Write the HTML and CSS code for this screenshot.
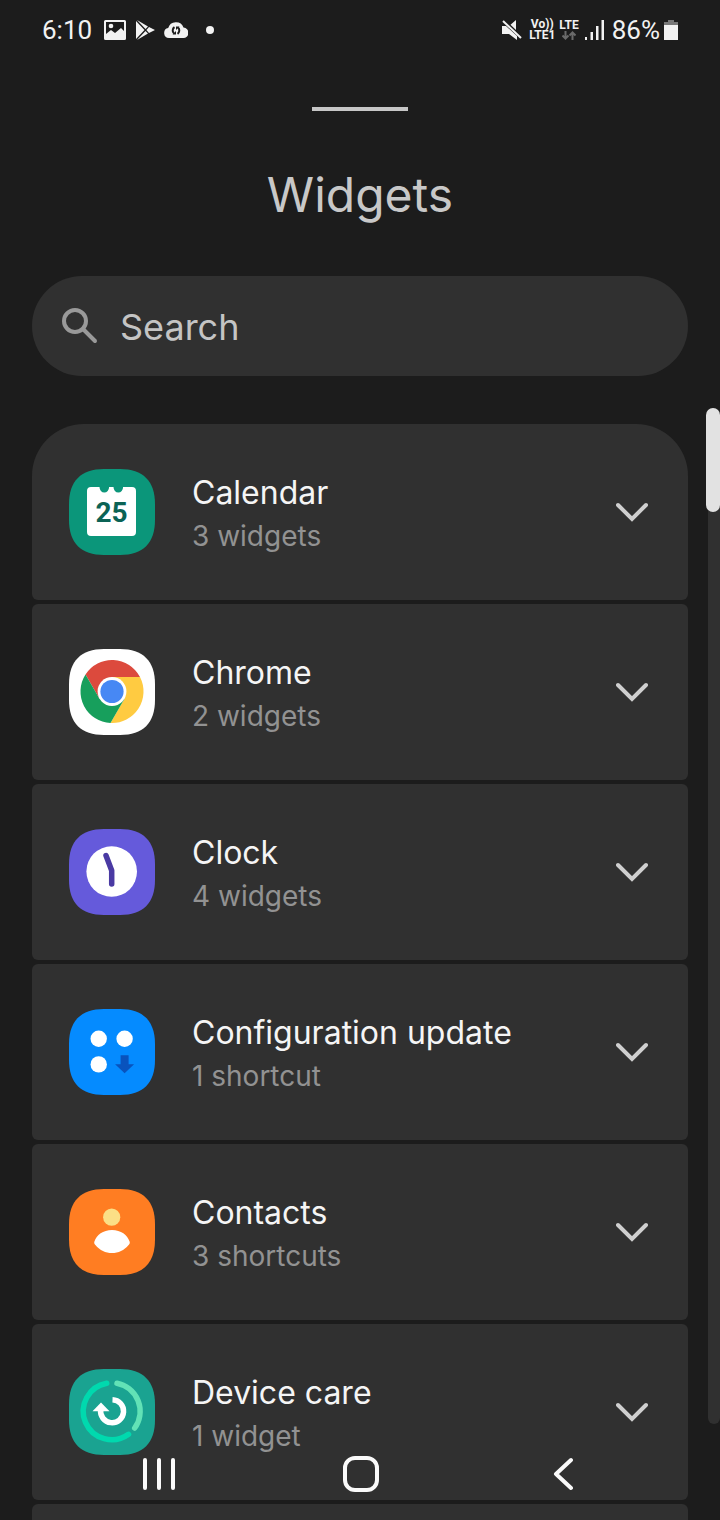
FILE: index.html
```
<!DOCTYPE html>
<html lang="en">
<head>
  <meta charset="UTF-8" />
  <meta name="viewport" content="width=device-width, initial-scale=1.0"/>
  <title>Widgets</title>
  <link rel="stylesheet" href="styles.css">
</head>
<body>
  <div class="screen">
    <header class="status">
      <span class="clock">6:10</span>
      <svg class="status-image" width="22" height="20" viewBox="0 0 22 20" aria-hidden="true">
        <path fill="#f2f2f2" fill-rule="evenodd" d="M1.500 0h19a1.500 1.500 0 0 1 1.500 1.500v17a1.500 1.500 0 0 1-1.500 1.500h-19a1.500 1.500 0 0 1-1.500-1.500v-17a1.500 1.500 0 0 1 1.500-1.500zM2 2v12l5-4 4 3 6-5 3 3V2z"/>
        <circle cx="7" cy="6" r="2.300" fill="#f2f2f2"/>
      </svg>
      <svg class="status-play" width="20" height="20" viewBox="0 0 20 20" aria-hidden="true">
        <path fill="#f2f2f2" d="M0 1v18l8.500-9zM1 0l8.500 9 2.500-2.600zM1 20l8.500-9 2.500 2.600zM13 7l-2.600 3 2.600 3 6-3z"/>
      </svg>
      <svg class="status-cloud" width="24" height="16" viewBox="0 0 24 16" aria-hidden="true">
        <path fill="#f2f2f2" d="M5 16a5 5 0 0 1-.8-9.900A8 8 0 0 1 19.500 5.600 5.200 5.200 0 0 1 19 16z"/>
        <path fill="none" stroke="#1c1c1c" stroke-width="2" d="M10.500 5.200a4 4 0 0 0-.5 6.300M13.500 11.800a4 4 0 0 0 .5-6.300"/>
        <path fill="#1c1c1c" d="M8.500 12.500h3.500v-3.500zM15.500 4.500H12V8z"/>
      </svg>
      <span class="dot"></span>
      <div class="status-right">
        <svg width="20" height="20" viewBox="0 0 20 20" aria-hidden="true">
          <path fill="#f2f2f2" d="M0 6h4l11 10v4l-8-6H0zM14 0v10L8.500 4.700z"/>
          <path stroke="#f2f2f2" stroke-width="2" d="M1 1l18 17"/>
        </svg>
        <span class="volte"><span>Vo))</span><span>LTE1</span></span>
        <span class="lte">
          <span>LTE</span>
          <svg width="14" height="9" viewBox="0 0 14 9" aria-hidden="true">
            <path fill="none" stroke="#6a6a6a" stroke-width="2" d="M3.500 0v7M.5 4.500l3 3 3-3M10.500 9V2M7.500 4.500l3-3 3 3"/>
          </svg>
        </span>
        <svg class="signal" width="19" height="20" viewBox="0 0 19 20" aria-hidden="true">
          <path fill="#f2f2f2" d="M0 17h2v3H0zM5.500 12h2.500v8H5.500zM11 6h2.500v14H11zM16.500 0H19v20h-2.500z"/>
        </svg>
        <span class="percent">86%</span>
        <svg width="14" height="20" viewBox="0 0 14 20" aria-hidden="true">
          <path fill="#777" d="M4 0h6v2h4v4H0V2h4z"/>
          <path fill="#f2f2f2" d="M0 5h14v15H0z"/>
        </svg>
      </div>
    </header>

    <main class="sheet">
      <div class="handle"></div>
      <h1>Widgets</h1>

      <label class="search">
        <svg width="36" height="36" viewBox="0 0 36 36" aria-hidden="true">
          <circle cx="13" cy="13" r="11" fill="none" stroke="#999" stroke-width="4"/>
          <path stroke="#999" stroke-width="4" stroke-linecap="round" d="M21 21l12 12"/>
        </svg>
        <input type="search" placeholder="Search" aria-label="Search">
      </label>

      <ul class="list">
        <li>
          <button class="row" aria-expanded="false">
            <svg class="app-icon" viewBox="0 0 88 88" aria-hidden="true">
              <path fill="#0b967a" d="M36 1H52C75 1 87 13 87 36V52C87 75 75 87 52 87H36C13 87 1 75 1 52V36C1 13 13 1 36 1z"/>
              <path fill="#fff" d="M23 19h8.500a4.800 5.500 0 0 0 9.600 0h4.400a4.800 5.500 0 0 0 9.600 0H64a4 4 0 0 1 4 4v41a4 4 0 0 1-4 4H23a4 4 0 0 1-4-4V23a4 4 0 0 1 4-4z"/>
              <text class="day" x="43.500" y="54" text-anchor="middle">25</text>
            </svg>
            <span class="label"><span class="name">Calendar</span><span class="count">3 widgets</span></span>
            <svg class="chevron" viewBox="0 0 32 20" aria-hidden="true"><path d="M2 3l14 14L30 3"/></svg>
          </button>
        </li>
        <li>
          <button class="row" aria-expanded="false">
            <svg class="app-icon" viewBox="0 0 88 88" aria-hidden="true">
              <path fill="#fff" d="M36 1H52C75 1 87 13 87 36V52C87 75 75 87 52 87H36C13 87 1 75 1 52V36C1 13 13 1 36 1z"/>
              <path fill="#dc4a3d" d="M17.500 26.500A31.500 31.500 0 0 1 72 29.100H44L31.500 50.700z"/>
              <path fill="#ffcb41" d="M72 29.100A31.500 31.500 0 0 1 42.500 75l14-24.300L44 29.100z"/>
              <path fill="#179f5c" d="M42.500 75a31.500 31.500 0 0 1-25-48.500l14 24.200h25z"/>
              <circle cx="44" cy="43.500" r="14.400" fill="#fff"/>
              <circle cx="44" cy="43.500" r="11.600" fill="#4788f4"/>
            </svg>
            <span class="label"><span class="name">Chrome</span><span class="count">2 widgets</span></span>
            <svg class="chevron" viewBox="0 0 32 20" aria-hidden="true"><path d="M2 3l14 14L30 3"/></svg>
          </button>
        </li>
        <li>
          <button class="row" aria-expanded="false">
            <svg class="app-icon" viewBox="0 0 88 88" aria-hidden="true">
              <path fill="#655adb" d="M36 1H52C75 1 87 13 87 36V52C87 75 75 87 52 87H36C13 87 1 75 1 52V36C1 13 13 1 36 1z"/>
              <circle cx="43.700" cy="43.500" r="25.300" fill="#fff"/>
              <path fill="none" stroke="#4a3aa3" stroke-width="5.500" stroke-linecap="round" stroke-linejoin="round" d="M38 27.500l5.700 15V56"/>
            </svg>
            <span class="label"><span class="name">Clock</span><span class="count">4 widgets</span></span>
            <svg class="chevron" viewBox="0 0 32 20" aria-hidden="true"><path d="M2 3l14 14L30 3"/></svg>
          </button>
        </li>
        <li>
          <button class="row" aria-expanded="false">
            <svg class="app-icon" viewBox="0 0 88 88" aria-hidden="true">
              <path fill="#058bff" d="M36 1H52C75 1 87 13 87 36V52C87 75 75 87 52 87H36C13 87 1 75 1 52V36C1 13 13 1 36 1z"/>
              <g fill="#fff">
                <circle cx="30.700" cy="30.700" r="8.200"/>
                <circle cx="56.600" cy="30.700" r="8.200"/>
                <circle cx="30.700" cy="56.400" r="8.200"/>
              </g>
              <path fill="#0953bd" d="M52.600 47.300h8v9h5.500l-9.500 9-9.500-9h5.500z"/>
            </svg>
            <span class="label"><span class="name">Configuration update</span><span class="count">1 shortcut</span></span>
            <svg class="chevron" viewBox="0 0 32 20" aria-hidden="true"><path d="M2 3l14 14L30 3"/></svg>
          </button>
        </li>
        <li>
          <button class="row" aria-expanded="false">
            <svg class="app-icon" viewBox="0 0 88 88" aria-hidden="true">
              <path fill="#ff7d22" d="M36 1H52C75 1 87 13 87 36V52C87 75 75 87 52 87H36C13 87 1 75 1 52V36C1 13 13 1 36 1z"/>
              <circle cx="43.700" cy="29.200" r="8.600" fill="#fbdf86"/>
              <path fill="#fff" d="M44 42c9 0 15.500 5 17.600 11.500.5 1.500 0 2.500-1 3.500C56 62.500 50.500 65 44 65s-12-2.500-16.600-8c-1-1-1.500-2-1-3.500C28.500 47 35 42 44 42z"/>
            </svg>
            <span class="label"><span class="name">Contacts</span><span class="count">3 shortcuts</span></span>
            <svg class="chevron" viewBox="0 0 32 20" aria-hidden="true"><path d="M2 3l14 14L30 3"/></svg>
          </button>
        </li>
        <li>
          <button class="row" aria-expanded="false">
            <svg class="app-icon" viewBox="0 0 88 88" aria-hidden="true">
              <path fill="#1aa391" d="M36 1H52C75 1 87 13 87 36V52C87 75 75 87 52 87H36C13 87 1 75 1 52V36C1 13 13 1 36 1z"/>
              <g fill="none" stroke-width="5.500" stroke-linecap="round">
                <path stroke="#00d9ae" d="M60.500 66.300A28.500 28.500 0 1 1 38.700 15.200"/>
                <path stroke="#62e2b6" d="M49 15.300A28.500 28.500 0 0 1 66.700 60"/>
              </g>
              <path fill="none" stroke="#fff" stroke-width="5.500" d="M44.500 31.700a11.500 11.500 0 1 1-11.800 9.800"/>
              <path fill="#fff" d="M33 34.500l8.500 8.800h-17z"/>
            </svg>
            <span class="label"><span class="name">Device care</span><span class="count">1 widget</span></span>
            <svg class="chevron" viewBox="0 0 32 20" aria-hidden="true"><path d="M2 3l14 14L30 3"/></svg>
          </button>
        </li>
        <li class="row"></li>
      </ul>
    </main>

    <div class="scroll-track"><div class="scroll-thumb"></div></div>

    <nav class="nav">
      <button aria-label="Recents">
        <svg width="32" height="36" viewBox="0 0 32 36"><path d="M2 4v28M16 4v28M30 4v28"/></svg>
      </button>
      <button aria-label="Home">
        <svg width="36" height="36" viewBox="0 0 36 36"><rect x="2" y="2" width="32" height="32" rx="10"/></svg>
      </button>
      <button aria-label="Back">
        <svg width="20" height="36" viewBox="0 0 20 36"><path d="M18 4L3 18l15 14"/></svg>
      </button>
    </nav>
  </div>
</body>
</html>
```
FILE: styles.css
```
* {
  box-sizing: border-box;
}
body {
  margin: 0;
  background: #1c1c1c;
  color: #f5f5f5;
  font-family: Inter, sans-serif;
}
button {
  border: 0;
  padding: 0;
  background: none;
  color: inherit;
  font: inherit;
}
svg {
  display: block;
  flex: none;
}
.screen {
  position: relative;
  height: 100vh;
  overflow: hidden;
}

/* status bar */
.status {
  display: flex;
  align-items: center;
  height: 60px;
  padding: 0 42px;
  color: #f2f2f2;
  font-family: Roboto, sans-serif;
  font-size: 26px;
}
.status-image {
  margin-left: 12px;
}
.status-play {
  margin-left: 10px;
}
.status-cloud {
  margin-left: 8px;
}
.dot {
  width: 8px;
  height: 8px;
  margin-left: 18px;
  border-radius: 50%;
  background: #f2f2f2;
}
.status-right {
  display: flex;
  align-items: center;
  margin-left: auto;
}
.volte,
.lte {
  display: flex;
  flex-direction: column;
  align-items: center;
  margin-left: 7px;
  font-size: 12px;
  font-weight: 700;
  line-height: 11px;
}
.lte {
  margin-left: 4px;
}
.signal {
  margin: 0 8px 0 6px;
}
.percent {
  margin-right: 4px;
}

/* widget sheet */
.sheet {
  padding: 47px 32px 0;
}
.handle {
  width: 96px;
  height: 4px;
  margin: 0 auto;
  background: #c6c6c6;
}
h1 {
  margin: 53px 0 51px;
  color: #c8c8c8;
  font-size: 48px;
  font-weight: 400;
  line-height: 61px;
  text-align: center;
}
.search {
  display: flex;
  align-items: center;
  gap: 22px;
  height: 100px;
  margin-bottom: 48px;
  padding: 0 30px;
  border-radius: 50px;
  background: #303030;
}
.search input {
  flex: 1;
  min-width: 0;
  padding: 2px 0 0;
  border: 0;
  outline: 0;
  background: none;
  color: #f5f5f5;
  font: 36px Inter, sans-serif;
}
.search input::placeholder {
  color: #c4c4c4;
}
.list {
  display: flex;
  flex-direction: column;
  gap: 4px;
  margin: 0;
  padding: 0;
  list-style: none;
}
.row {
  display: flex;
  align-items: center;
  width: 100%;
  height: 176px;
  padding: 0 40px 0 36px;
  border-radius: 6px;
  background: #303030;
  text-align: left;
}
.list li:first-child .row {
  border-radius: 52px 52px 6px 6px;
}
.app-icon {
  width: 88px;
  height: 88px;
}
.day {
  fill: #0b6355;
  font: 700 28px Roboto, sans-serif;
}
.label {
  display: flex;
  flex: 1;
  flex-direction: column;
  margin-left: 36px;
  padding-top: 5px;
}
.name {
  font-size: 32px;
  line-height: 44px;
}
.count {
  color: #929292;
  font-size: 28px;
  line-height: 43px;
}
.chevron {
  width: 32px;
  height: 20px;
  fill: none;
  stroke: #cfcfcf;
  stroke-width: 4;
  stroke-linecap: round;
}

/* scrollbar over the right edge */
.scroll-track {
  position: absolute;
  top: 408px;
  right: 0;
  bottom: 96px;
  width: 12px;
  border-radius: 6px;
  background: #303030;
}
.scroll-thumb {
  width: 14px;
  height: 104px;
  margin-left: -2px;
  border-radius: 8px;
  background: #e2e2e2;
}

/* navigation buttons over the list */
.nav {
  position: absolute;
  right: 0;
  bottom: 0;
  left: 0;
  display: grid;
  grid-template-columns: repeat(3, 1fr);
  height: 92px;
  padding: 0 56px 0 58px;
}
.nav button {
  display: flex;
  align-items: center;
  justify-content: center;
}
.nav svg {
  fill: none;
  stroke: #fafafa;
  stroke-width: 4;
  stroke-linecap: round;
  stroke-linejoin: round;
}
```
